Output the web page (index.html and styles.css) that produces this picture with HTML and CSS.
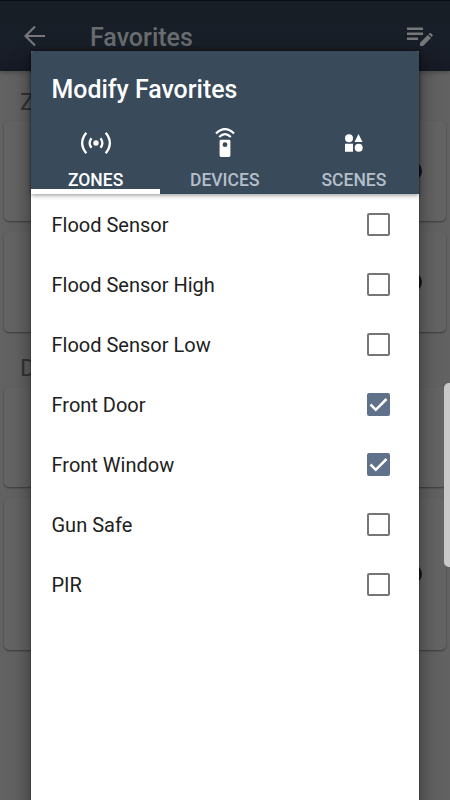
FILE: index.html
```html
<!DOCTYPE html>
<html lang="en">
<head>
<meta charset="utf-8">
<title>Favorites</title>
<link rel="stylesheet" href="styles.css">
</head>
<body>
<div class="screen">
  <header class="appbar">
    <svg class="back" viewBox="0 0 22 22"><path d="M21 11H2M11 1.500L1.500 11l9.500 9.500" fill="none" stroke="currentColor" stroke-width="2.200"/></svg>
    <h1>Favorites</h1>
    <svg class="edit" viewBox="0 0 26 20"><path d="M0 1.700h16M0 6.700h16M0 11.700h11" stroke="currentColor" stroke-width="2.500"/><path d="M13 19v-3.300l7.800-7.800 3.200 3.200-7.900 7.900zM21.500 7.200l1-1q.8-.6 1.500 0l1.500 1.500q.7.700 0 1.400l-1 1z" fill="currentColor"/></svg>
  </header>
  <main class="page">
    <h2>Z</h2>
    <section class="card"><span class="dot"></span></section>
    <section class="card"><span class="dot"></span></section>
    <h2>D</h2>
    <section class="card"></section>
    <section class="card tall"><span class="dot"></span></section>
  </main>
  <div class="handle"></div>
  <div class="dialog">
    <div class="head">
      <h3>Modify Favorites</h3>
      <nav class="tabs">
        <div class="tab active">
          <svg width="32" height="24" viewBox="0 0 32 24"><circle cx="16" cy="12" r="2.700" fill="currentColor"/><path d="M11.500 7.200Q7.700 12 11.500 16.800M20.500 7.200Q24.300 12 20.500 16.800M6.300 1.700Q-2 12 6.300 22.300M25.700 1.700Q34 12 25.700 22.300" fill="none" stroke="currentColor" stroke-width="2.300"/></svg>
          <span>ZONES</span>
        </div>
        <div class="tab">
          <svg width="24" height="30" viewBox="0 0 24 30"><path d="M3 5.500Q12-3.300 21 5.500M6.200 9Q12 3.200 17.800 9" fill="none" stroke="#fff" stroke-width="2.200"/><path fill="#fff" fill-rule="evenodd" d="M8 11.700h8q1.400 0 1.400 1.400v14.400q0 1.400-1.400 1.400H8q-1.400 0-1.400-1.400V13.100q0-1.400 1.400-1.400zM12 14.300a2.400 2.400 0 1 0 0 4.800 2.400 2.400 0 0 0 0-4.800z"/></svg>
          <span>DEVICES</span>
        </div>
        <div class="tab">
          <svg width="18" height="18" viewBox="0 0 18 18" fill="#fff"><circle cx="4" cy="4.200" r="4"/><path d="M13.500 0l4 8h-8zM0 9.800h8v8H0z"/><circle cx="13.700" cy="13.700" r="4"/></svg>
          <span>SCENES</span>
        </div>
      </nav>
    </div>
    <ul class="list">
      <li><span>Flood Sensor</span><i class="box"></i></li>
      <li><span>Flood Sensor High</span><i class="box"></i></li>
      <li><span>Flood Sensor Low</span><i class="box"></i></li>
      <li><span>Front Door</span><i class="box checked"><svg viewBox="0 0 23 23"><path d="M3.500 11.500l5.300 5.300L19.500 6" fill="none" stroke="#fff" stroke-width="2.500"/></svg></i></li>
      <li><span>Front Window</span><i class="box checked"><svg viewBox="0 0 23 23"><path d="M3.500 11.500l5.300 5.300L19.500 6" fill="none" stroke="#fff" stroke-width="2.500"/></svg></i></li>
      <li><span>Gun Safe</span><i class="box"></i></li>
      <li><span>PIR</span><i class="box"></i></li>
    </ul>
  </div>
</div>
</body>
</html>
```
FILE: styles.css
```css
* { box-sizing: border-box; }
body { margin: 0; font-family: Roboto, sans-serif; }
h1, h2, h3, ul { margin: 0; padding: 0; }
.screen { position: relative; width: 450px; height: 800px; overflow: hidden; background: #626262; }
.appbar { position: relative; display: flex; align-items: center; height: 71px; padding: 3px 17px 0 24px; background: linear-gradient(#181e26, #191f28 60%, #161a25); border-top: 1px solid #080c16; color: #757779; box-shadow: 0 1px 5px rgba(0,0,0,.3); }
.back { width: 22px; height: 22px; margin-bottom: 4px; }
.appbar h1 { flex: 1; margin-left: 44px; font-size: 25px; font-weight: 500; line-height: 30px; color: #6a6d70; }
.edit { width: 26px; height: 20px; margin-bottom: 1px; }
.page { padding: 0 4px; }
.page h2 { height: 50px; padding: 15px 0 0 16px; font-size: 24px; line-height: 32px; font-weight: 400; color: #343434; }
.card { display: flex; align-items: center; justify-content: flex-end; height: 100px; margin-bottom: 11px; padding-right: 24px; border-radius: 5px; background: #646464; box-shadow: 0 1px 2px rgba(0,0,0,.4); }
.card + h2 { height: 44px; padding-top: 9px; }
.card.tall { height: 152px; }
.dot { width: 20px; height: 20px; border-radius: 50%; background: #151719; }
.handle { position: absolute; left: 444px; top: 383px; width: 12px; height: 184px; border-radius: 5px; background: #c9c9c9; }
.dialog { position: absolute; left: 31px; top: 51px; width: 387.500px; height: 760px; border-radius: 2px 2px 0 0; background: #fff; box-shadow: 0 8px 22px rgba(0,0,0,.48), 0 0 2px rgba(0,0,0,.5); }
.head { position: relative; height: 143px; border-radius: 2px 2px 0 0; background: #394a5b; box-shadow: 0 1px 5px rgba(0,0,0,.45); }
.head h3 { height: 75px; padding: 24px 0 0 20.500px; font-size: 24.900px; line-height: 30px; font-weight: 500; color: #fff; }
.tabs { display: flex; height: 68px; }
.tab { flex: 1; display: grid; grid-template-rows: 34px 34px; place-items: center; color: #b4bfca; }
.tab span { padding-top: 6px; font-size: 17.500px; line-height: 20px; font-weight: 500; }
.tab.active { color: #fff; border-bottom: 5px solid #fff; }
.list { padding-top: 1px; list-style: none; }
.list li { display: flex; align-items: center; justify-content: space-between; height: 60px; padding: 0 28.500px 0 20.500px; font-size: 20px; color: #212121; }
.box { width: 23px; height: 23px; margin-bottom: 2px; border: 2.500px solid #757575; border-radius: 2px; }
.box.checked { border: 0; background: #60718a; }
.box svg { display: block; }
```
